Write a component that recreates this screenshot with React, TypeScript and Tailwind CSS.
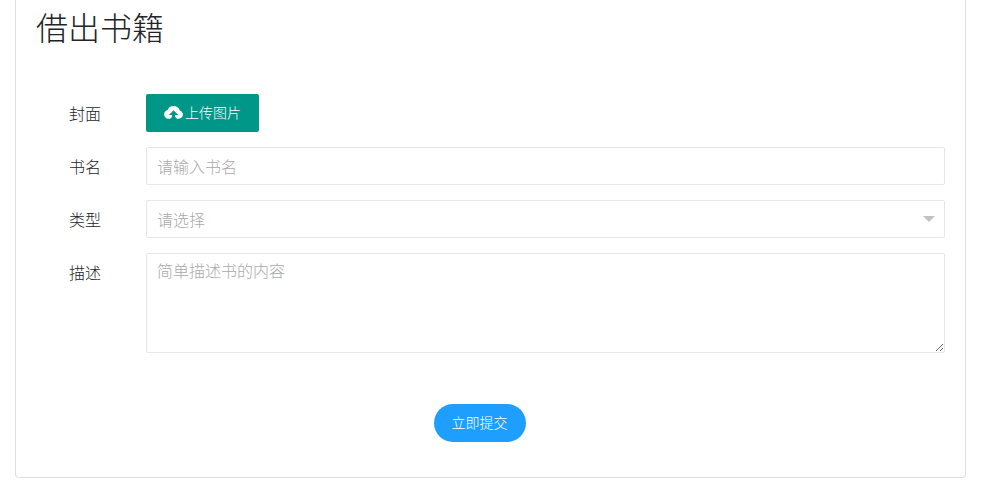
import type { ReactNode } from 'react'

type FormRowProps = {
  label: string
  htmlFor: string
  children: ReactNode
}

const fieldClass =
  'block w-full rounded-xs border border-[#e6e6e6] bg-white pl-2.5 text-base font-light placeholder:text-[#a9a9a9] placeholder:opacity-100 focus:border-[#c9c9c9] focus:outline-none'

export default function App() {
  return (
    <main className="ml-[15px] mr-[29px] rounded-b border border-t-0 border-[#dfdfdf] bg-white px-5 pb-[35px] pt-[7px] font-['Noto_Sans_CJK_SC',sans-serif] font-light text-[#212529]">
      <h1 className="text-[32px] font-light leading-[38px]">借出书籍</h1>

      <form className="mt-[49px] flex flex-col gap-[15px]" onSubmit={(event) => event.preventDefault()}>
        <FormRow label="封面" htmlFor="cover">
          <button
            id="cover"
            type="button"
            className="flex h-[38px] items-center gap-0.5 rounded-xs bg-[#009688] px-[18px] pb-0.5 text-sm font-light text-white hover:opacity-80"
          >
            <UploadIcon />
            上传图片
          </button>
        </FormRow>

        <FormRow label="书名" htmlFor="title">
          <input id="title" type="text" placeholder="请输入书名" className={`${fieldClass} h-[38px]`} />
        </FormRow>

        <FormRow label="类型" htmlFor="category">
          <div className="relative">
            <select
              id="category"
              defaultValue=""
              className={`${fieldClass} h-[38px] appearance-none pr-8 text-[#a9a9a9]`}
            >
              <option value="">请选择</option>
            </select>
            <svg
              viewBox="0 0 12 6"
              className="pointer-events-none absolute right-2.5 top-4 h-1.5 w-3 fill-[#c2c2c2]"
              aria-hidden="true"
            >
              <path d="M0 0h12L6 6z" />
            </svg>
          </div>
        </FormRow>

        <FormRow label="描述" htmlFor="description">
          <textarea
            id="description"
            placeholder="简单描述书的内容"
            className={`${fieldClass} h-[100px] resize-y py-1.5 leading-5`}
          />
        </FormRow>

        <div className="mt-9 flex justify-center pr-[22px]">
          <button
            type="submit"
            className="h-[38px] rounded-full bg-[#1e9fff] px-[18px] pb-0.5 text-sm font-light text-white hover:opacity-80"
          >
            立即提交
          </button>
        </div>
      </form>
    </main>
  )
}

function FormRow({ label, htmlFor, children }: FormRowProps) {
  return (
    <div className="flex items-start">
      <label htmlFor={htmlFor} className="w-[110px] shrink-0 py-[9px] pr-[45px] text-right text-base leading-5">
        {label}
      </label>
      <div className="min-w-0 flex-1">{children}</div>
    </div>
  )
}

function UploadIcon() {
  return (
    <svg viewBox="0 0 19 14" className="h-3.5 w-[19px] fill-white" aria-hidden="true">
      <path d="M15.7 5.4C15.2 2.8 12.6 1 9.6 1 6.8 1 4.4 2.6 3.7 5 1.6 5.4.1 7.1.1 9.2c0 2.7 2 4.6 4.4 4.6 1.9 0 3.2-1 3.6-2.6V10H4.9l4.7-4.8 4.7 4.8H11v1.2c.4 1.6 1.8 2.6 3.7 2.6 2.3 0 4.2-1.9 4.2-4.2 0-2-1.3-3.7-3.2-4.2z" />
    </svg>
  )
}
